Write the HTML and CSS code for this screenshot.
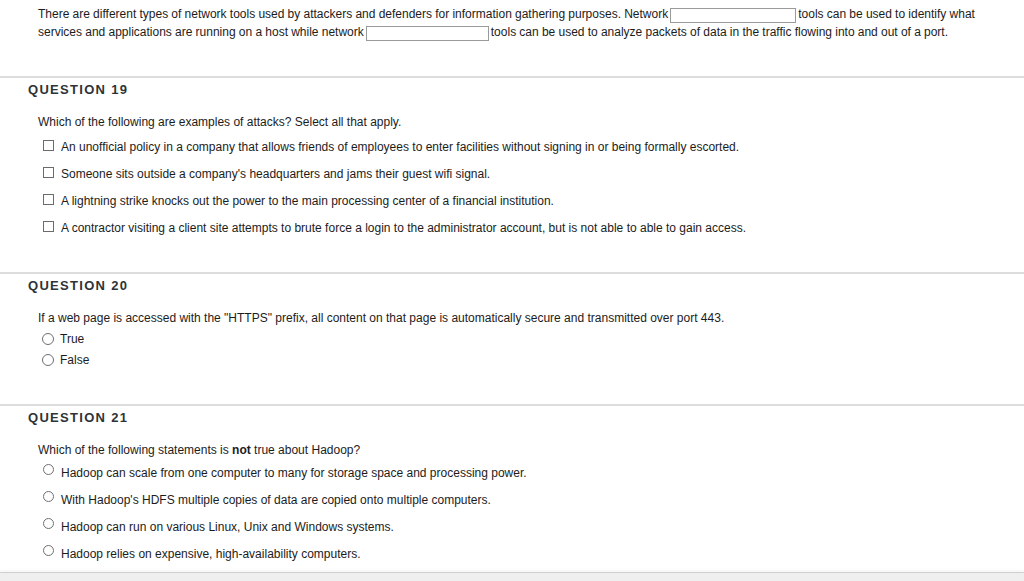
FILE: index.html
```html
<!DOCTYPE html>
<html>
<head>
<meta charset="utf-8">
<link rel="stylesheet" href="styles.css">
</head>
<body>
<div class="intro">
  <p>There are different types of network tools used by attackers and defenders for information gathering purposes. Network<span class="blank w1"></span>tools can be used to identify what services and applications are running on a host while network<span class="blank w2"></span>tools can be used to analyze packets of data in the traffic flowing into and out of a port.</p>
</div>

<section class="question q19">
  <h2>QUESTION 19</h2>
  <p class="stem">Which of the following are examples of attacks? Select all that apply.</p>
  <ul class="opts tall">
    <li><span class="check"></span>An unofficial policy in a company that allows friends of employees to enter facilities without signing in or being formally escorted.</li>
    <li><span class="check"></span>Someone sits outside a company's headquarters and jams their guest wifi signal.</li>
    <li><span class="check"></span>A lightning strike knocks out the power to the main processing center of a financial institution.</li>
    <li><span class="check"></span>A contractor visiting a client site attempts to brute force a login to the administrator account, but is not able to able to gain access.</li>
  </ul>
</section>

<section class="question q20">
  <h2>QUESTION 20</h2>
  <p class="stem">If a web page is accessed with the "HTTPS" prefix, all content on that page is automatically secure and transmitted over port 443.</p>
  <ul class="opts short">
    <li><span class="radio"></span>True</li>
    <li><span class="radio"></span>False</li>
  </ul>
</section>

<section class="question q21">
  <h2>QUESTION 21</h2>
  <p class="stem">Which of the following statements is <b>not</b> true about Hadoop?</p>
  <ul class="opts tall">
    <li><span class="radio small"></span>Hadoop can scale from one computer to many for storage space and processing power.</li>
    <li><span class="radio small"></span>With Hadoop's HDFS multiple copies of data are copied onto multiple computers.</li>
    <li><span class="radio small"></span>Hadoop can run on various Linux, Unix and Windows systems.</li>
    <li><span class="radio small"></span>Hadoop relies on expensive, high-availability computers.</li>
  </ul>
</section>

<div class="footer-band"></div>
</body>
</html>
```

FILE: styles.css
```css
html, body {
  margin: 0;
  padding: 0;
  background: #fff;
}
body {
  font-family: "Liberation Sans", Arial, sans-serif;
  font-size: 12px;
  color: #1c1c1c;
  width: 1024px;
  height: 581px;
  overflow: hidden;
}
p { margin: 0; }

.intro {
  padding: 5px 40px 0 38px;
}
.intro p {
  line-height: 18px;
  width: 950px;
  word-spacing: -0.12px;
}
.blank {
  display: inline-block;
  height: 15px;
  border: 1px solid #9a9a9a;
  background: #fff;
  vertical-align: -5px;
  margin: 0 2px;
  box-sizing: border-box;
}
.blank.w1 { width: 126px; }
.blank.w2 { width: 123px; }

.question {
  border-top: 2px solid #dcdcdc;
}
.intro + .question { margin-top: 35px; }

.question h2 {
  margin: 0;
  padding: 4px 28px 0;
  font-size: 13px;
  line-height: 16px;
  font-weight: bold;
  letter-spacing: 1.3px;
  color: #2e3338;
}
.stem {
  margin-top: 16px;
  padding-left: 38px;
  line-height: 16px;
}
.stem b { font-weight: bold; }

.opts {
  list-style: none;
  margin: 0;
  padding: 0;
}
.opts li {
  display: flex;
  align-items: center;
  padding-left: 43px;
}
.opts.tall { margin-top: 3px; }
.opts.tall li { height: 27px; }
.opts.short { margin-top: 2px; }
.opts.short li { height: 21px; padding-left: 42px; }

.check {
  width: 11px;
  height: 11px;
  border: 1px solid #6b6b6b;
  box-sizing: border-box;
  margin-right: 7px;
  flex: none;
  background: #fff;
  position: relative;
  top: -1px;
}
.radio {
  width: 12px;
  height: 12px;
  border: 1px solid #6f6f6f;
  border-radius: 50%;
  box-sizing: border-box;
  margin-right: 6px;
  flex: none;
  background: #fff;
}
.radio.small {
  width: 11px;
  height: 11px;
  margin-right: 7px;
  position: relative;
  top: -3px;
}

.q19 { padding-bottom: 31px; }
.q20 { padding-bottom: 34px; }
.q21 .opts.tall { margin-top: 1px; }
.q21 { padding-bottom: 5px; }

.footer-band {
  border-top: 1px solid #cfcfcf;
  background: #efefef;
  height: 20px;
  box-shadow: 0 -2px 3px rgba(0,0,0,0.04);
}
```
